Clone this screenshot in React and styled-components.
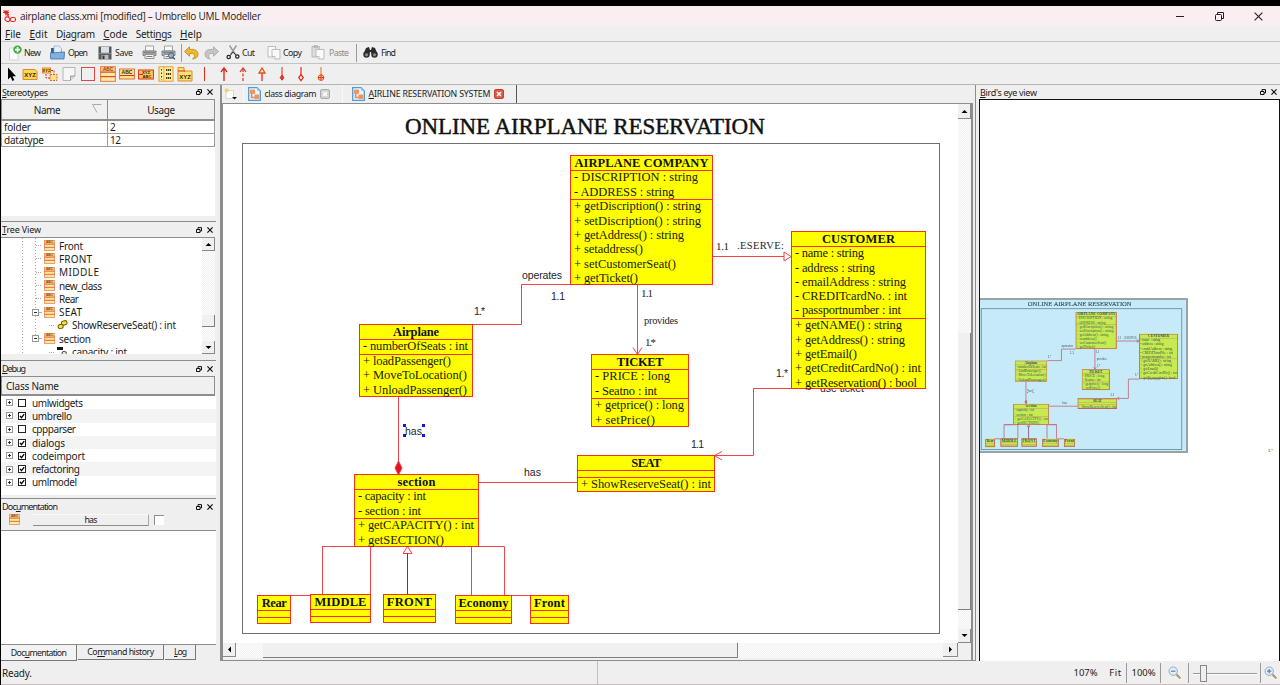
import React from "react";
import styled, { createGlobalStyle, css } from "styled-components";

const UI = '"Noto Sans", "Open Sans", sans-serif';
const SERIF = '"Liberation Serif", serif';
const SANS = '"Liberation Sans", sans-serif';

/* Letter spacing that makes a run of text fill a known width. */
const pen = document.createElement("canvas").getContext("2d");
const tracking = (text, font, width) => {
  pen.font = font;
  return (width - pen.measureText(text).width) / Math.max(1, text.length - 1);
};

const Global = createGlobalStyle`
  * { box-sizing: border-box; }
  body { margin: 0; background: #efefef; overflow: hidden; }
  svg { display: block; flex: none; }
`;

const Run = styled.span`
  font: ${(p) => p.$font};
  letter-spacing: ${(p) => p.$ls}px;
  color: ${(p) => p.$color || "#1c1c1c"};
  white-space: pre;
  flex: none;
  u { text-underline-offset: 1px; text-decoration-thickness: 1px; }
`;

function T({ children, w, size = 10, family = UI, bold, color, u }) {
  const font = `${bold ? "bold" : "normal"} ${size}px ${family}`;
  const ls = w ? tracking(children, font, w) : 0;
  const body =
    u === undefined ? children : (
      <>
        {children.slice(0, u)}
        <u>{children[u]}</u>
        {children.slice(u + 1)}
      </>
    );
  return <Run $font={font} $ls={ls.toFixed(3)} $color={color}>{body}</Run>;
}

/* ---------- window chrome ---------- */
const Window = styled.div`
  width: 1280px;
  height: 685px;
  display: flex;
  flex-direction: column;
  background: #efefef;
  border-top: 6px solid #000;
  border-left: 1px solid #000;
  overflow: hidden;
`;
const TitleBar = styled.div`
  height: 20px;
  flex: none;
  display: flex;
  align-items: center;
  gap: 3px;
  padding: 0 17px 0 1px;
  background: #f9eff0;
`;
const Controls = styled.div`
  margin-left: auto;
  display: flex;
  align-items: center;
  gap: 30px;
`;
const MenuBar = styled.div`
  height: 15px;
  flex: none;
  display: flex;
  align-items: center;
  gap: 8.5px;
  padding-left: 4px;
`;
const ToolBar = styled.div`
  height: ${(p) => p.$h}px;
  flex: none;
  display: flex;
  align-items: center;
  padding-left: ${(p) => p.$pad}px;
  border-top: 1px solid #c4c4c4;
`;
const Tool = styled.div`
  width: ${(p) => p.$w}px;
  flex: none;
  display: flex;
  align-items: center;
  gap: ${(p) => p.$gap ?? 3}px;
`;
const ToolSep = styled.div`
  width: 1px;
  height: 18px;
  margin-right: ${(p) => p.$mr}px;
  background: #9a9a9a;
`;
const Main = styled.div`
  height: 577px;
  flex: none;
  display: flex;
  border-top: 1px solid #b5b5b5;
`;

/* ---------- left docks ---------- */
const LeftDocks = styled.div`
  width: 215px;
  flex: none;
  display: flex;
  flex-direction: column;
`;
const Dock = styled.section`
  height: ${(p) => p.$h}px;
  flex: none;
  display: flex;
  flex-direction: column;
  & + & { border-top: 1px solid #8c8c8c; }
`;
const DockHead = styled.header`
  height: ${(p) => p.$h || 15}px;
  flex: none;
  display: flex;
  align-items: center;
  gap: 5px;
  padding: 0 3px 0 1px;
  svg:first-of-type { margin-left: auto; }
`;
const TableGrid = styled.div`
  height: 117px;
  margin-right: 1px;
  display: grid;
  grid-template-columns: 107px 107px;
  grid-template-rows: 22px 13px 13px;
  background: #fff;
`;
const HeadCell = styled.div`
  display: flex;
  align-items: center;
  justify-content: center;
  background: #f0f0f0;
  border: solid #8d8d8d;
  border-width: 1px 1px 2px ${(p) => (p.$first ? 1 : 0)}px;
  padding-right: ${(p) => (p.$first ? 15 : 0)}px;
  position: relative;
`;
const SortMark = styled.svg`
  position: absolute;
  right: 5px;
  top: 4px;
`;
const Cell = styled.div`
  display: flex;
  align-items: center;
  padding-left: 2px;
  border: solid #9d9d9d;
  border-width: 0 1px 1px ${(p) => (p.$first ? 1 : 0)}px;
`;
const TreeBox = styled.div`
  height: 117px;
  margin-right: 1px;
  display: flex;
  background: #fff;
  border-top: 1px solid #8d8d8d;
  overflow: hidden;
`;
const TreeRows = styled.div`
  flex: 1;
  padding-top: 1px;
  background:
    repeating-linear-gradient(#aaa 0 1px, transparent 1px 3px) 21px 0 / 1px 100% no-repeat,
    repeating-linear-gradient(#aaa 0 1px, transparent 1px 3px) 34px 0 / 1px 100px no-repeat;
`;
const TreeRow = styled.div`
  height: 13.3px;
  display: flex;
  align-items: center;
  gap: 4px;
  padding-left: ${(p) => p.$pad}px;
`;
const Twig = styled.span`
  width: ${(p) => (p.$box ? 12 : 8)}px;
  height: 7px;
  margin-right: -4px;
  display: flex;
  align-items: center;
  &::after {
    content: "";
    flex: 1;
    border-top: 1px dotted #aaa;
    margin-right: 3px;
  }
`;
const Expander = styled.span`
  width: 7px;
  height: 7px;
  flex: none;
  border: 1px solid #999;
  background:
    linear-gradient(#333, #333) center / 3px 1px no-repeat,
    linear-gradient(#333, #333) center / ${(p) => (p.$plus ? "1px 3px" : "0 0")} no-repeat,
    #fff;
`;
const ClassHead = styled.div`
  height: 20px;
  margin-right: 1px;
  display: flex;
  align-items: center;
  padding-left: 4px;
  border: solid #8d8d8d;
  border-width: 1px 1px 2px;
  background: #f0f0f0;
`;
const CheckRows = styled.div`
  height: 99px;
  flex: none;
  background: #fff;
`;
const CheckRow = styled.div`
  height: 13.3px;
  display: flex;
  align-items: center;
  padding-left: 5px;
  background: ${(p) => (p.$alt ? "#f4f4f4" : "transparent")};
`;
const CheckBox = styled.span`
  width: 8px;
  height: 8px;
  margin: 0 6px 0 5px;
  border: 1px solid #222;
  background: #fff;
  svg { margin: -1px; }
`;
const DocRow = styled.div`
  height: 17px;
  display: flex;
  align-items: flex-start;
  padding-left: 8px;
  border-bottom: 1px solid #8d8d8d;
`;
const FlatButton = styled.div`
  width: 116px;
  height: 12px;
  margin: 0 5px 0 13px;
  display: flex;
  align-items: center;
  justify-content: center;
  border-bottom: 1px solid #8d8d8d;
  border-right: 1px solid #aaa;
  border-top: 1px solid #fafafa;
`;
const SunkenBox = styled.span`
  width: 10px;
  height: 10px;
  margin-top: 1px;
  background: #fff;
  border: solid #8d8d8d;
  border-width: 1px 0 0 1px;
`;
const DocText = styled.div`
  flex: 1;
  background: #fff;
  border-bottom: 1px solid #8d8d8d;
`;
const BottomTabs = styled.div`
  height: 16px;
  flex: none;
  display: flex;
  gap: 1px;
`;
const BottomTab = styled.div`
  width: ${(p) => p.$w}px;
  height: ${(p) => (p.$active ? 16 : 15)}px;
  display: flex;
  align-items: center;
  justify-content: center;
  border: solid #777;
  border-width: 0 1px 1px 0;
  ${(p) => p.$active && css`background: #f3f3f3;`}
`;

/* ---------- centre ---------- */
const Center = styled.div`
  width: 756px;
  height: 576px;
  margin-left: 4px;
  flex: none;
  display: flex;
  flex-direction: column;
  border: solid #8d8d8d;
  border-width: 0 1px 1px 2px;
`;
const TabBar = styled.div`
  height: 18px;
  flex: none;
  display: flex;
`;
const Tab = styled.div`
  width: ${(p) => p.$w}px;
  padding-left: ${(p) => p.$pad}px;
  display: flex;
  align-items: center;
  gap: 3.5px;
  border-right: ${(p) => (p.$active ? "1px solid #555" : "1px solid #f8f8f8")};
`;
const ViewFrame = styled.div`
  flex: 1;
  display: grid;
  grid-template-columns: 735px 13px;
  grid-template-rows: 539px 15px;
  border: solid #8d8d8d;
  border-width: 1px 2px 0 1px;
  background: #f0f0f0;
  margin-right: 2px;
`;
const Canvas = styled.div`
  position: relative;
  background: #fff;
  overflow: hidden;
`;
const Scroll = styled.div`
  display: flex;
  flex-direction: ${(p) => (p.$v ? "column" : "row")};
  background: repeating-conic-gradient(#f2f2f2 0 25%, #fcfcfc 0 50%) 0 0 / 2px 2px;
`;
const ArrowButton = styled.div`
  width: ${(p) => p.$w || 13}px;
  height: ${(p) => p.$h || 13}px;
  flex: none;
  display: flex;
  align-items: center;
  justify-content: center;
  background: #f0f0f0;
  border: solid #888;
  border-width: 0 1px 1px 0;
`;
const Gap = styled.div`
  flex: 0 0 ${(p) => p.$s}px;
`;
const Thumb = styled.div`
  flex: 0 0 ${(p) => p.$s}px;
  background: #f0f0f0;
  border: solid #7f7f7f;
  border-width: 0 1px 1px 0;
`;
const Rest = styled.div`
  flex: 1;
`;

/* ---------- diagram ---------- */
const Scene = styled.div`
  position: absolute;
  left: ${(p) => p.$x}px;
  top: ${(p) => p.$y}px;
  width: 1280px;
  height: 685px;
  transform: scale(${(p) => p.$scale || 1});
  transform-origin: 0 0;
  --line: ${(p) => p.$line || 1}px;
`;
const PageFrame = styled.div`
  position: absolute;
  left: 242px;
  top: 143px;
  width: 698px;
  height: 491px;
  border: var(--line) solid #6f6f6f;
`;
const Links = styled.svg`
  position: absolute;
  inset: 0;
  stroke-width: var(--line);
`;
const Note = styled.div`
  position: absolute;
  left: ${(p) => p.$x}px;
  top: ${(p) => p.$y - 8}px;
  height: 16px;
  display: flex;
  align-items: center;
`;
const Heading = styled(Note)`
  top: 112px;
  height: 30px;
  -webkit-text-stroke: 0.45px #111;
`;
const Node = styled.div`
  position: absolute;
  left: ${(p) => p.$x}px;
  top: ${(p) => p.$y}px;
  width: ${(p) => p.$w}px;
  height: ${(p) => p.$h}px;
  display: flex;
  flex-direction: column;
  background: #ff0;
  box-shadow: inset 0 0 0 var(--line) #f5301c;
  padding: 1px;
`;
const NodeName = styled.div`
  height: 14px;
  flex: none;
  display: flex;
  align-items: center;
  justify-content: center;
`;
const Compartment = styled.div`
  min-height: 7px;
  flex: none;
  border-top: 1px solid #f5301c;
`;
const Member = styled.div`
  height: 14.3px;
  padding-left: 3px;
  display: flex;
  align-items: center;
  &:first-child { margin-top: -0.4px; }
`;
const Handle = styled.i`
  position: absolute;
  left: ${(p) => p.$x}px;
  top: ${(p) => p.$y}px;
  width: 3px;
  height: 3px;
  background: #1414d8;
`;

const nodes = [
  { n: "AIRPLANE COMPANY", nw: 134, x: 570, y: 155, w: 143, h: 130,
    a: [["- DISCRIPTION : string", 124], ["- ADDRESS : string", 101]],
    o: [["+ getDiscription() : string", 127], ["+ setDiscription() : string", 127], ["+ getAddress() : string", 110], ["+ setaddress()", 69], ["+ setCustomerSeat()", 102], ["+ getTicket()", 64]] },
  { n: "CUSTOMER", nw: 73, x: 791, y: 231, w: 135, h: 158,
    a: [["- name : string", 69], ["- address : string", 80], ["- emailAddress : string", 111], ["- CREDITcardNo. : int", 112], ["- passportnumber : int", 106]],
    o: [["+ getNAME() : string", 107], ["+ getAddress() : string", 110], ["+ getEmail()", 62], ["+ getCreditCardNo() : int", 126], ["+ getReservation() : bool", 122]] },
  { n: "Airplane", nw: 46, x: 359, y: 324, w: 114, h: 73,
    a: [["- numberOfSeats : int", 105]],
    o: [["+ loadPassenger()", 88], ["+ MoveToLocation()", 104], ["+ UnloadPassenger()", 104]] },
  { n: "TICKET", nw: 47, x: 591, y: 354, w: 98, h: 73,
    a: [["- PRICE : long", 75], ["- Seatno : int", 62]],
    o: [["+ getprice() : long", 89], ["+ setPrice()", 60]] },
  { n: "SEAT", nw: 30, x: 577, y: 455, w: 138, h: 37, a: [], o: [["+ ShowReserveSeat() : int", 130]] },
  { n: "section", nw: 38, x: 354, y: 474, w: 125, h: 73,
    a: [["- capacity : int", 68], ["- section : int", 63]],
    o: [["+ getCAPACITY() : int", 116], ["+ getSECTION()", 86]] },
  { n: "Rear", nw: 25, x: 257, y: 595, w: 34, h: 29, a: [], o: [] },
  { n: "MIDDLE", nw: 52, x: 310, y: 594, w: 61, h: 29, a: [], o: [] },
  { n: "FRONT", nw: 45, x: 383, y: 594, w: 53, h: 29, a: [], o: [] },
  { n: "Economy", nw: 50, x: 455, y: 595, w: 57, h: 29, a: [], o: [] },
  { n: "Front", nw: 31, x: 530, y: 595, w: 39, h: 29, a: [], o: [] },
];

const notes = [
  ["operates", 522, 275, 40, SANS, 10.5],
  ["1.1", 551, 296, 14, SANS, 10.5],
  ["1.*", 474, 311, 11, SANS, 10.5],
  ["1.1", 716, 246, 13, SERIF, 11],
  [".ESERVE:", 737, 245, 47, SERIF, 10.5],
  ["1.1", 641, 293, 12, SERIF, 11],
  ["provides", 644, 320, 34, SERIF, 10.5],
  ["1.*", 645, 342, 11, SERIF, 11],
  ["1.*", 776, 373, 12, SANS, 10.5],
  ["use ticket", 820, 388, 44, SANS, 10.5],
  ["1.1", 691, 444, 13, SANS, 10.5],
  ["has", 405, 431, 17, SANS, 10.5],
  ["has", 524, 472, 17, SANS, 10.5],
];

function Diagram({ x, y, scale, line }) {
  return (
    <Scene $x={x} $y={y} $scale={scale} $line={line}>
      <PageFrame />
      <Heading $x={405}>
        <T w={361} size={23} family={SERIF} color="#111">ONLINE AIRPLANE RESERVATION</T>
      </Heading>
      {notes.map(([t, nx, ny, w, f, s], i) => (
        <Note key={i} $x={nx} $y={ny}><T w={w} size={s} family={f} color="#23232e">{t}</T></Note>
      ))}
      <Links width="1280" height="685" fill="none" stroke="#ee4450">
        <path d="M571 284.5H521.5V324.5H472M713 256.5H784M637.5 284V354M633 347.5L637.5 354.5L642 347.5M792 388.5H753.5V455.5H714.5M722 451.5L714.5 455.5L722 460M398.5 396V462M478 482.5H578M354 546.5H322.5V595.5H290M370.5 546V594M471.5 546V595M478 546.5H504.5V595.5H530M322 546.5H372M471 546.5H504" />
        <path d="M784 252L791 256.5L784 261ZM403 553.5H412L407.5 546.5Z" fill="#fff" />
        <path d="M407.5 553.5V594" stroke="#a02030" />
        <path d="M398.5 461L402 468L398.5 475L395 468Z" fill="#e8101c" />
      </Links>
      {nodes.map((b) => (
        <Node key={b.n + b.x} $x={b.x} $y={b.y} $w={b.w} $h={b.h}>
          <NodeName><T w={b.nw} size={12.5} family={SERIF} bold color="#111">{b.n}</T></NodeName>
          {[b.a, b.o].map((list, i) => (
            <Compartment key={i}>
              {list.map(([t, w]) => (
                <Member key={t}><T w={w} size={12.5} family={SERIF} color="#1a1a08">{t}</T></Member>
              ))}
            </Compartment>
          ))}
        </Node>
      ))}
      <Handle $x={403} $y={424} /><Handle $x={422} $y={424} />
      <Handle $x={403} $y={434} /><Handle $x={422} $y={434} />
    </Scene>
  );
}

/* ---------- right dock ---------- */
const RightDock = styled.div`
  width: 301px;
  margin-left: 3px;
  flex: none;
  display: flex;
  flex-direction: column;
`;
const Birdview = styled.div`
  position: relative;
  flex: 1;
  background: #fff;
  border: solid #111;
  border-width: 1px 1px 0 1px;
  overflow: hidden;
`;
const Viewport = styled.div`
  position: absolute;
  left: 0;
  top: 198px;
  width: 208px;
  height: 155px;
  border: 2px solid #98a3a8;
  border-left: 0;
  background: #fff;
  overflow: hidden;
`;
const Tint = styled.div`
  position: absolute;
  inset: 0;
  background: rgba(91, 194, 235, 0.34);
`;
const FarLabel = styled.div`
  position: absolute;
  left: 288px;
  top: 338px;
`;

/* ---------- status bar ---------- */
const StatusBar = styled.div`
  height: 24px;
  flex: none;
  display: flex;
  align-items: center;
  border-bottom: 1px solid #c9bdbd;
  padding-left: 1px;
`;
const StatusLeft = styled.div`
  width: 596px;
  height: 100%;
  display: flex;
  align-items: center;
  border-right: 1px solid #c0c0c0;
`;
const ZoomTools = styled.div`
  margin-left: auto;
  height: 100%;
  display: flex;
  align-items: center;
`;
const ZoomCell = styled.div`
  width: ${(p) => p.$w}px;
  height: 20px;
  display: flex;
  align-items: center;
  justify-content: center;
  border-right: 1px solid ${(p) => (p.$line ? "#9a9a9a" : "transparent")};
`;

/* ---------- icons ---------- */
const AppIcon = () => (
  <svg width="15" height="14" viewBox="0 0 15 14" fill="none" stroke="#e02a20" strokeWidth="1.1">
    <path d="M1 3.5H7M4 1V6.5M1.5 1.5L7 6M6.5 1.5L3 5M5 5.5L7 8" />
    <rect x="3" y="8" width="5" height="4" rx="1.8" transform="rotate(25 5 10)" />
    <rect x="8.5" y="8.5" width="5" height="4" rx="1.8" />
  </svg>
);
const FloatIcon = () => (
  <svg width="6" height="6" viewBox="0 0 6 6" fill="none" stroke="#111"><path d="M2 2V.6H5.5V4H4M.5 2.5H4V5.5H.5Z" /></svg>
);
const CloseIcon = ({ s = 6, c = "#111", sw = 1.2 }) => (
  <svg width={s} height={s} viewBox="0 0 6 6" stroke={c} strokeWidth={sw}><path d="M.4 .4L5.6 5.6M5.6 .4L.4 5.6" /></svg>
);
const Tri = ({ d }) => (
  <svg width="7" height="7" viewBox="0 0 7 7" fill="#000">
    <path d={{ up: "M.5 5H6.5L3.5 2Z", down: "M.5 2H6.5L3.5 5Z", left: "M5 .5V6.5L2 3.5Z", right: "M2 .5V6.5L5 3.5Z" }[d]} />
  </svg>
);
const ClassIcon = ({ s = 11 }) => (
  <svg width={s} height={s} viewBox="0 0 15 15">
    <rect x=".6" y=".6" width="13.8" height="13.8" fill="#fdeaa0" stroke="#e8804a" />
    <rect x="1" y="1" width="13" height="4" fill="#f6bf70" />
    <text x="7.5" y="4.6" fontSize="4.4" fontWeight="bold" textAnchor="middle" fontFamily="Liberation Sans" fill="#8a4a20">ABC</text>
    <path d="M.5 5.7H14.5M.5 10H14.5" stroke="#dc4a30" strokeWidth="1.1" />
  </svg>
);
const NewIcon = () => (
  <svg width="14" height="16" viewBox="0 0 14 16">
    <path d="M.5 3H9V15H.5Z" fill="#fbfbfb" stroke="#d5d5d5" />
    <circle cx="8.5" cy="4.6" r="4.2" fill="#3fae3a" />
    <path d="M8.5 2V7.2M6 4.6H11" stroke="#fff" strokeWidth="1.6" />
  </svg>
);
const OpenIcon = () => (
  <svg width="15" height="15" viewBox="0 0 15 15">
    <path d="M1 3H5L6 4.5H12V12H1Z" fill="#33608f" />
    <path d="M4 1H9L11.5 3.5V9H4Z" fill="#e4eef8" stroke="#8aa8c8" strokeWidth=".7" />
    <path d="M0 8L14.6 7L14 14H.8Z" fill="#7fb0e2" stroke="#3f6fa6" strokeWidth=".8" />
  </svg>
);
const SaveIcon = () => (
  <svg width="14" height="14" viewBox="0 0 14 14">
    <path d="M.5 .5H13.5V13.5H.5Z" fill="#55585c" />
    <rect x="3" y=".8" width="8" height="6" fill="#dcdfe3" />
    <rect x="3.5" y="9" width="7" height="4.5" fill="#b8bcc2" /><rect x="4.5" y="9.6" width="2" height="3.4" fill="#333" />
    <path d="M1 7.6H13" stroke="#8a9098" />
  </svg>
);
const PrintIcon = ({ lens }) => (
  <svg width="15" height="15" viewBox="0 0 15 15">
    <path d="M3.5 1H11.5V6H3.5Z" fill="#f8f8f8" stroke="#999" strokeWidth=".9" />
    <path d="M1 6H14V10.5H1Z" fill="#b5b7b9" stroke="#6c6f72" strokeWidth=".8" />
    <path d="M3 9.5H12V13.5H3Z" fill="#f4f4f4" stroke="#888" strokeWidth=".9" />
    <path d="M2 7.8H13M4.5 11.5H10.5" stroke="#5c5c5c" strokeWidth=".8" />
    {lens && <><circle cx="10" cy="10.4" r="2.5" fill="#8fb4d8" stroke="#4a6680" /><path d="M11.8 12.2L14 14.4" stroke="#444" strokeWidth="1.2" /></>}
  </svg>
);
const TurnIcon = ({ redo }) => (
  <svg width="15" height="14" viewBox="0 0 15 14">
    <g transform={redo ? "translate(15 0) scale(-1 1)" : undefined}>
      <path d="M.5 5.5L5.5 .8V3.5C11 2.6 14.2 5 14 8.5C13.8 11 12 12.8 8.5 13C10.6 11.6 11 10 10 8.6C9 7.3 7.5 7.3 5.5 7.5V10.3Z" fill={redo ? "#c5c5c5" : "#eeb92c"} stroke={redo ? "#a5a5a5" : "#bf8514"} strokeWidth=".8" />
    </g>
  </svg>
);
const CutIcon = () => (
  <svg width="14" height="15" viewBox="0 0 14 15" fill="none">
    <path d="M3.5 .5L9.5 9.5M10.5 .5L4.5 9.5" stroke="#999" strokeWidth="1.4" />
    <circle cx="2.7" cy="12" r="1.7" stroke="#222" strokeWidth="1.2" /><circle cx="11.3" cy="11.5" r="1.7" stroke="#222" strokeWidth="1.2" />
    <path d="M4 10.8L7 7L10 10.2" stroke="#333" />
  </svg>
);
const CopyIcon = ({ paste }) => (
  <svg width="14" height="15" viewBox="0 0 14 15" fill="#fafafa" stroke="#b5b5b5" strokeWidth=".9">
    <path d="M1 1.5H8.5V12H1Z" fill={paste ? "#dcdcdc" : "#fafafa"} />
    {paste && <path d="M3 .6H6.5V2.6H3Z" fill="#bbb" />}
    <path d="M5 4.5H13V14H8L5 11.5Z" /><path d="M5 11.5H8V14" />
  </svg>
);
const FindIcon = () => (
  <svg width="15" height="13" viewBox="0 0 15 13">
    <path d="M3 2L6 1L7 4H8L9 1L12 2L14.5 8H8.5L8 6H7L6.5 8H.5Z" fill="#2a2a2a" />
    <circle cx="3.5" cy="8.5" r="3.2" fill="#2d2d2d" /><circle cx="11.5" cy="8.5" r="3.2" fill="#2d2d2d" />
    <circle cx="3.5" cy="8.8" r="1.6" fill="#8a8a8a" /><circle cx="11.5" cy="8.8" r="1.6" fill="#8a8a8a" />
  </svg>
);
const lbl = { fontSize: 6, fontWeight: "bold", textAnchor: "middle", fontFamily: "Liberation Sans", fill: "#3a1a00" };
const S = ({ children }) => <svg width="16" height="16" viewBox="0 0 16 16" fill="none" stroke="#e02a1c">{children}</svg>;
const paletteIcons = [
  <S><path d="M5 1.5V13.5L7.6 11L9.5 15L11.3 14.1L9.5 10.3H13Z" fill="#000" stroke="none" /></S>,
  <S><path d="M1 4V13.5H15V5.5L13 3.5H1Z" fill="#fbd75a" stroke="#e08a2c" /><text x="8" y="11" {...lbl} stroke="none">XYZ</text></S>,
  <S><rect x=".5" y="2" width="8" height="5" fill="#fbd75a" stroke="#e08a2c" /><rect x="8" y="8.5" width="7" height="6" fill="#fbe08a" stroke="#d8682c" strokeDasharray="2 1" /><path d="M9 4.5H12V8M4 8V12H8" strokeDasharray="2 1" /><text x="4.5" y="6.2" {...lbl} fontSize="4" stroke="none">XYZ</text></S>,
  <S><path d="M2 1.5H14V10L9.5 14.5H2Z" fill="#f6f6f6" stroke="#b5b5b5" /><path d="M14 10H9.5V14.5" stroke="#999" fill="#ddd" /></S>,
  <S><rect x="1.5" y="1.5" width="13" height="13" stroke="#d84848" /></S>,
  <ClassIcon s={16} />,
  <S><rect x=".6" y="3" width="14.8" height="10" fill="#fde58a" stroke="#e0703c" /><text x="8" y="8" {...lbl} fontSize="5" stroke="none">ABC</text><path d="M1 9.5H15" /></S>,
  <S><rect x=".6" y="4" width="14.8" height="9" fill="#fbc85a" /><path d="M1 8.5H5" /><text x="8" y="8" {...lbl} fontSize="4.2" stroke="none">XYZ</text><text x="9" y="12.3" {...lbl} fontSize="4.2" stroke="none">ABC</text></S>,
  <S><rect x="1" y=".8" width="14" height="14.4" fill="#fdf09a" stroke="#e89a3c" /><path d="M3.5 3V14" stroke="#333" strokeDasharray="1.5 2" /><path d="M5.8 1V15" stroke="#f0a850" /><path d="M8 4H13M8 8H13M8 12H13" stroke="#4a3a10" strokeWidth="1.8" strokeDasharray="1.4 .6" /></S>,
  <S><path d="M1 1.5H7V5H15V15H1Z" fill="#fbe070" stroke="#e08a2c" /><path d="M1 5H8" /><text x="8" y="12.5" {...lbl} stroke="none">XYZ</text></S>,
  <S><path d="M8.5 1V15" /></S>,
  <S><path d="M8 3V15M5 6L8 2L11 6" strokeWidth="1.4" /></S>,
  <S><path d="M8 3V15" strokeDasharray="3 1.5" strokeWidth="1.2" /><path d="M5 6L8 2L11 6" strokeWidth="1.2" /></S>,
  <S><path d="M8 7V15" strokeWidth="1.3" /><path d="M5 7H11L8 2Z" fill="#fff0c0" stroke="#e0501c" strokeWidth="1.3" /></S>,
  <S><path d="M8 1V10" /><path d="M8 9L9.8 11.6L8 14.2L6.2 11.6Z" fill="#f03020" /></S>,
  <S><path d="M8 1V9" strokeWidth="1.2" /><path d="M8 8.6L10.2 11.6L8 14.6L5.8 11.6Z" fill="#fff" strokeWidth="1.3" /></S>,
  <S><path d="M8 1V9" stroke="#e0701c" /><circle cx="8" cy="11.6" r="2.8" fill="#ffd9a0" stroke="#e0501c" /><path d="M5 11.6H11M8 8.6V14.6" /></S>,
];
const DiagramIcon = () => (
  <svg width="13" height="14" viewBox="0 0 13 14">
    <path d="M.7 .7H9L12.3 4V13.3H.7Z" fill="#eef6fd" stroke="#4f9bd8" strokeWidth="1.3" />
    <rect x="2" y="2.5" width="5" height="4.5" rx="1" fill="#f0935c" /><rect x="6.4" y="7.6" width="5" height="4.4" rx="1" fill="#f0935c" />
    <path d="M3.6 7V10.5H7" stroke="#e08a60" strokeWidth="1.6" fill="none" /><path d="M9 .7V4H12.3" fill="#9ccaf0" />
  </svg>
);
const NewTabIcon = () => (
  <svg width="14" height="13" viewBox="0 0 14 13">
    <path d="M2 2.5H9.5V10.5H2Z" fill="#fff" stroke="#ccc" strokeWidth=".8" /><circle cx="2.6" cy="2.6" r="2" fill="#f3cf60" />
    <path d="M8 9H13L10.5 11.5Z" fill="#111" />
  </svg>
);
const TabClose = ({ red }) => (
  <svg width="10" height="10" viewBox="0 0 10 10">
    <rect x=".5" y=".5" width="9" height="9" rx="1.5" fill={red ? "#dd5a44" : "#d0d4d0"} stroke={red ? "#c2402c" : "#a9ada9"} />
    <path d="M3 3L7 7M7 3L3 7" stroke="#fff" strokeWidth="1.5" />
  </svg>
);
const MethodIcon = () => (
  <svg width="11" height="10" viewBox="0 0 11 10" fill="#f2e23c" stroke="#6a5a00" strokeWidth="1">
    <rect x="4.5" y="1" width="5.5" height="4" rx="1.6" transform="rotate(-15 7 3)" /><rect x="1" y="4.6" width="5" height="4" rx="1.6" transform="rotate(-15 3 6)" />
  </svg>
);
const AttrIcon = () => (
  <svg width="11" height="10" viewBox="0 0 11 10"><rect x="0" y="0" width="6" height="3" fill="#111" /><circle cx="7.2" cy="6.5" r="2.2" fill="#f2e9c0" stroke="#444" /></svg>
);
const LensIcon = ({ plus }) => (
  <svg width="13" height="13" viewBox="0 0 13 13" fill="none">
    <circle cx="5.2" cy="5.2" r="4.2" fill="#e3eef6" stroke="#9aa9b5" /><path d="M8.5 8.5L12.3 12.3" stroke="#b08a60" strokeWidth="1.8" />
    <path d={plus ? "M3 5.2H7.4M5.2 3V7.4" : "M3 5.2H7.4"} stroke="#4a86c0" strokeWidth="1.2" />
  </svg>
);

/* ---------- data ---------- */
const menus = [["File", 16, 0], ["Edit", 18, 0], ["Diagram", 39, 1], ["Code", 24, 0], ["Settings", 36, 5], ["Help", 22, 0]];
const treeRows = [
  ["Front", 24], ["FRONT", 33], ["MIDDLE", 40], ["new_class", 43], ["Rear", 20], ["SEAT", 23, "open"],
  ["ShowReserveSeat() : int", 104, "method"], ["section", 32, "open"], ["capacity : int", 55, "attr"],
];
const debugRows = [["umlwidgets", 51, 0], ["umbrello", 40, 1], ["cppparser", 44, 0], ["dialogs", 33, 1], ["codeimport", 53, 1], ["refactoring", 48, 1], ["umlmodel", 45, 1]];

function DockTitle({ text, w, u = 0, h }) {
  return <DockHead $h={h}><T size={9} w={w} u={u}>{text}</T><FloatIcon /><CloseIcon /></DockHead>;
}

export default function App() {
  return (
    <>
      <Global />
      <Window>
        <TitleBar>
          <AppIcon />
          <T size={10} w={241} family='"Open Sans", sans-serif'>airplane class.xmi [modified] – Umbrello UML Modeller</T>
          <Controls>
            <svg width="9" height="9" viewBox="0 0 9 9" stroke="#222"><path d="M0 4.5H8" /></svg>
            <svg width="9" height="9" viewBox="0 0 9 9" fill="none" stroke="#222"><rect x=".5" y="2.5" width="6" height="6" rx="1" /><path d="M2.5 2V.5H8.5V6.5H7" /></svg>
            <CloseIcon s={9} c="#222" sw={0.75} />
          </Controls>
        </TitleBar>
        <MenuBar>{menus.map(([t, w, u]) => <T key={t} w={w} u={u} size={10}>{t}</T>)}</MenuBar>
        <ToolBar $h={22} $pad={8}>
          <Tool $w={41} $gap={1}><NewIcon /><T w={17} size={8.8}>New</T></Tool>
          <Tool $w={48}><OpenIcon /><T w={20} size={8.8}>Open</T></Tool>
          <Tool $w={44}><SaveIcon /><T w={18} size={8.8}>Save</T></Tool>
          <Tool $w={19}><PrintIcon /></Tool>
          <Tool $w={20}><PrintIcon lens /></Tool>
          <ToolSep $mr={2} />
          <Tool $w={20}><TurnIcon /></Tool>
          <Tool $w={22}><TurnIcon redo /></Tool>
          <Tool $w={41} $gap={2}><CutIcon /><T w={13} size={8.8}>Cut</T></Tool>
          <Tool $w={44} $gap={2}><CopyIcon /><T w={19} size={8.8}>Copy</T></Tool>
          <Tool $w={45} $gap={4}><CopyIcon paste /><T w={20} size={8.8} color="#8c8c8c">Paste</T></Tool>
          <ToolSep $mr={6} />
          <Tool $w={40}><FindIcon /><T w={15} size={8.8}>Find</T></Tool>
        </ToolBar>
        <ToolBar $h={21} $pad={2}>
          {paletteIcons.map((icon, i) => <Tool key={i} $w={19.35}>{icon}</Tool>)}
        </ToolBar>
        <Main>
          <LeftDocks>
            <Dock $h={136}>
              <DockTitle text="Stereotypes" w={46} h={14} />
              <TableGrid>
                <HeadCell $first>
                  <T w={27}>Name</T>
                  <SortMark width="10" height="9" viewBox="0 0 10 9" fill="none" stroke="#aaa"><path d="M9.5 .5H.5L5 8.5" /></SortMark>
                </HeadCell>
                <HeadCell><T w={28}>Usage</T></HeadCell>
                <Cell $first><T w={27}>folder</T></Cell><Cell><T>2</T></Cell>
                <Cell $first><T w={40}>datatype</T></Cell><Cell><T w={11}>12</T></Cell>
              </TableGrid>
            </Dock>
            <Dock $h={139}>
              <DockTitle text="Tree View" w={39} />
              <TreeBox>
                <TreeRows>
                  {treeRows.map(([t, w, kind]) => (
                    <TreeRow key={t} $pad={kind === "open" ? 31 : kind ? 48 : 35}>
                      <Twig $box={kind === "open"}>{kind === "open" && <Expander />}</Twig>
                      {kind === "method" ? <MethodIcon /> : kind === "attr" ? <AttrIcon /> : <ClassIcon />}
                      <T w={w}>{t}</T>
                    </TreeRow>
                  ))}
                </TreeRows>
                <Scroll $v>
                  <ArrowButton><Tri d="up" /></ArrowButton>
                  <Gap $s={64} />
                  <Thumb $s={12} />
                  <Rest />
                  <ArrowButton><Tri d="down" /></ArrowButton>
                </Scroll>
              </TreeBox>
            </Dock>
            <Dock $h={138}>
              <DockTitle text="Debug" w={24} />
              <ClassHead><T w={53}>Class Name</T></ClassHead>
              <CheckRows>
                {debugRows.map(([t, w, on], i) => (
                  <CheckRow key={t} $alt={i % 2 === 1}>
                    <Expander $plus />
                    <CheckBox>{on ? <svg width="8" height="8" viewBox="0 0 8 8" fill="none" stroke="#000" strokeWidth="1.3"><path d="M2 3.8L3.5 5.6L6.2 2.2" /></svg> : null}</CheckBox>
                    <T w={w}>{t}</T>
                  </CheckRow>
                ))}
              </CheckRows>
            </Dock>
            <Dock $h={147}>
              <DockTitle text="Documentation" w={56} u={3} />
              <DocRow>
                <ClassIcon />
                <FlatButton><T w={13} size={8.8}>has</T></FlatButton>
                <SunkenBox />
              </DocRow>
              <DocText />
            </Dock>
            <BottomTabs>
              <BottomTab $w={76} $active><T w={56} size={8.8} u={3}>Documentation</T></BottomTab>
              <BottomTab $w={86}><T w={67} size={8.8} u={2}>Command history</T></BottomTab>
              <BottomTab $w={31}><T w={13} size={8.8} u={0}>Log</T></BottomTab>
            </BottomTabs>
          </LeftDocks>
          <Center>
            <TabBar>
              <Tab $w={22} $pad={2}><NewTabIcon /></Tab>
              <Tab $w={99} $pad={4}><DiagramIcon /><T w={52} size={8.8}>class diagram</T><TabClose /></Tab>
              <Tab $w={174} $pad={9}  $active><DiagramIcon /><T w={122} size={8.8} u={0}>AIRLINE RESERVATION SYSTEM</T><TabClose red /></Tab>
            </TabBar>
            <ViewFrame>
              <Canvas><Diagram x={-223} y={-104} /></Canvas>
              <Scroll $v>
                <ArrowButton $h={15}><Tri d="up" /></ArrowButton>
                <Gap $s={214} />
                <Thumb $s={277} />
                <Rest />
                <ArrowButton $h={14}><Tri d="down" /></ArrowButton>
              </Scroll>
              <Scroll>
                <ArrowButton $h={14}><Tri d="left" /></ArrowButton>
                <Gap $s={27} />
                <Thumb $s={475} />
                <Rest />
                <ArrowButton $h={14} $w={15}><Tri d="right" /></ArrowButton>
              </Scroll>
            </ViewFrame>
          </Center>
          <RightDock>
            <DockTitle text="Bird's eye view" w={57} h={14} />
            <Birdview>
              <Viewport>
                <Diagram x={-68.7} y={-32.7} scale={0.2885} line={3} />
                <Tint />
              </Viewport>
              <FarLabel><T size={4} family={SANS}>1.*</T></FarLabel>
            </Birdview>
          </RightDock>
        </Main>
        <StatusBar>
          <StatusLeft><T w={30}>Ready.</T></StatusLeft>
          <ZoomTools>
            <ZoomCell $w={38}><T w={24} size={9.5}>107%</T></ZoomCell>
            <ZoomCell $w={22} $line><T w={12} size={9.5}>Fit</T></ZoomCell>
            <ZoomCell $w={34} $line><T w={24} size={9.5}>100%</T></ZoomCell>
            <ZoomCell $w={28} $line><LensIcon /></ZoomCell>
            <ZoomCell $w={72} $line>
              <svg width="68" height="20" viewBox="0 0 68 20"><path d="M2 10.5H66" stroke="#999" /><path d="M2 11.5H66" stroke="#fff" /><rect x="9.5" y="2.5" width="6" height="16" fill="#efefef" stroke="#888" /></svg>
            </ZoomCell>
            <ZoomCell $w={19}><LensIcon plus /></ZoomCell>
          </ZoomTools>
        </StatusBar>
      </Window>
    </>
  );
}
